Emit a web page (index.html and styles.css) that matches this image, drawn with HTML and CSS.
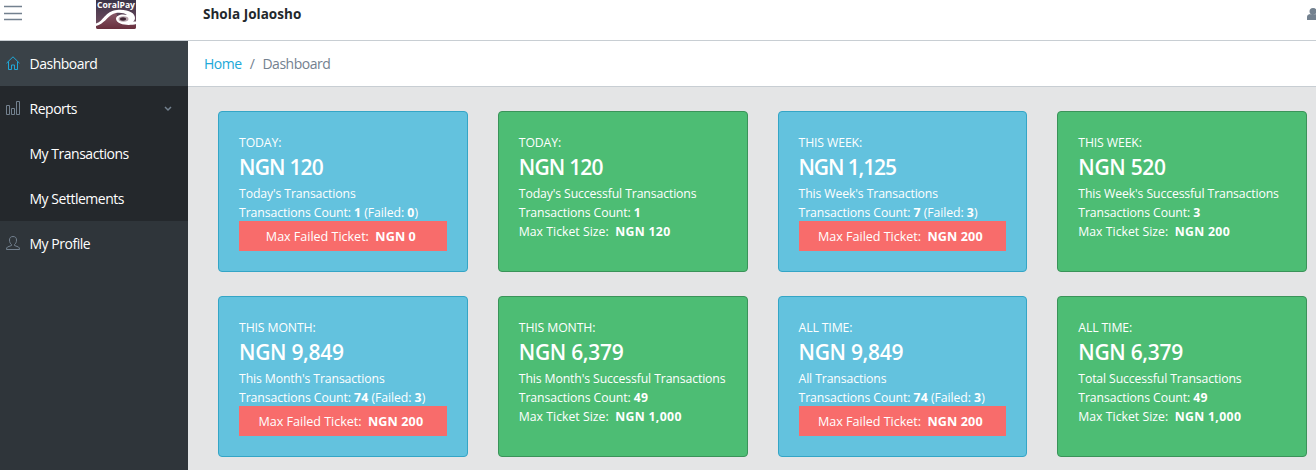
FILE: index.html
```
<!DOCTYPE html>
<html lang="en">
<head>
<meta charset="utf-8">
<title>Dashboard</title>
<link rel="stylesheet" href="styles.css">
</head>
<body>
<header class="header">
  <svg class="menu" viewBox="0 0 18 16"><path d="M0 1.500h18M0 8.500h18M0 14.500h18"/></svg>
  <svg class="logo" viewBox="0 0 40 29">
    <defs>
      <linearGradient id="sky" x1="0" y1="0" x2="0" y2="1"><stop offset="0" stop-color="#3b3448"/><stop offset=".6" stop-color="#5f4458"/><stop offset="1" stop-color="#7c5160"/></linearGradient>
      <linearGradient id="wave" x1="0" y1="0" x2="0" y2="1"><stop offset="0" stop-color="#8a5c6c"/><stop offset="1" stop-color="#682f3d"/></linearGradient>
    </defs>
    <path d="M0 0h40v27q0 2-2 2H2q-2 0-2-2z" fill="url(#sky)"/>
    <path d="M0 25C9 22 10 12 20 12L23 22L40 25V27q0 2-2 2H2q-2 0-2-2z" fill="url(#wave)"/>
    <path d="M0 23.500C7 22 9 11 21 10C32 9 39 13 39 18C39 20 38 21 37 21.500L40 21.500V24C33 26 21 25 20 19C20 15 26 13.500 31 15C28 12.500 21 12 17 14C11 17 8 24 0 26z" fill="#fff"/>
    <ellipse cx="27.500" cy="19" rx="5" ry="2.800" fill="#b9a4ad"/>
    <ellipse cx="27" cy="19" rx="3" ry="1.700" fill="#3f2635"/>
    <text x="20" y="7.500" text-anchor="middle" textLength="38" lengthAdjust="spacingAndGlyphs" class="logo-text">CoralPay</text>
  </svg>
  <strong class="user">Shola Jolaosho</strong>
  <svg class="avatar" viewBox="0 0 12 12"><path d="M2.500 3.500a3.500 3.500 0 0 1 7 0C9.500 8 2.500 8 2.500 3.500zM0 12V9q0-2.500 3-3 3 2 6 0 3 .5 3 3v3z"/></svg>
</header>
<div class="body">
  <nav class="sidebar">
    <a class="item active"><svg class="icon" viewBox="0 0 14 14"><path d="M.5 7.200 7 .8l6.500 6.400M2.500 5.500v8h3V9h3v4.500h3v-8"/></svg><span>Dashboard</span></a>
    <div class="group">
      <a class="item"><svg class="icon" viewBox="0 0 14 14"><path d="M.5 4.500h3v9h-3zM5.500 7.500h3v6h-3zM10.500.5h3v13h-3z"/></svg><span>Reports</span><svg class="chevron" viewBox="0 0 8 6"><path d="m1 1 3 3 3-3"/></svg></a>
      <a class="item sub">My Transactions</a>
      <a class="item sub">My Settlements</a>
    </div>
    <a class="item"><svg class="icon" viewBox="0 0 14 14"><path d="M7 .5C4.500.5 3.500 2 3.500 4c0 2.200.8 3.700 2 4.500v1L1.500 11Q.5 11.500.5 13.500h13q0-2-1-2.500l-4-1.500v-1c1.200-.8 2-2.300 2-4.500 0-2-1-3.500-3.500-3.500z"/></svg><span>My Profile</span></a>
  </nav>
  <main class="main">
    <div class="breadcrumb"><a class="home">Home</a><span class="slash">/</span><span class="here">Dashboard</span></div>
    <section class="cards">
      <article class="card info"><div class="period">TODAY:</div><h4 class="amount tight">NGN 120</h4><p class="line">Today's Transactions</p><p class="line count">Transactions Count: <b>1</b> (Failed: <b>0</b>)</p><p class="failed">Max Failed Ticket: &nbsp;<b>NGN 0</b></p></article>
      <article class="card success"><div class="period">TODAY:</div><h4 class="amount tight">NGN 120</h4><p class="line">Today's Successful Transactions</p><p class="line count">Transactions Count: <b>1</b></p><p class="line ticket">Max Ticket Size: &nbsp;<b>NGN 120</b></p></article>
      <article class="card info"><div class="period">THIS WEEK:</div><h4 class="amount tighter">NGN 1,125</h4><p class="line">This Week's Transactions</p><p class="line count">Transactions Count: <b>7</b> (Failed: <b>3</b>)</p><p class="failed">Max Failed Ticket: &nbsp;<b>NGN 200</b></p></article>
      <article class="card success"><div class="period">THIS WEEK:</div><h4 class="amount">NGN 520</h4><p class="line">This Week's Successful Transactions</p><p class="line count">Transactions Count: <b>3</b></p><p class="line ticket">Max Ticket Size: &nbsp;<b>NGN 200</b></p></article>
      <article class="card info"><div class="period">THIS MONTH:</div><h4 class="amount">NGN 9,849</h4><p class="line">This Month's Transactions</p><p class="line count">Transactions Count: <b>74</b> (Failed: <b>3</b>)</p><p class="failed">Max Failed Ticket: &nbsp;<b>NGN 200</b></p></article>
      <article class="card success"><div class="period">THIS MONTH:</div><h4 class="amount">NGN 6,379</h4><p class="line">This Month's Successful Transactions</p><p class="line count">Transactions Count: <b>49</b></p><p class="line ticket">Max Ticket Size: &nbsp;<b>NGN 1,000</b></p></article>
      <article class="card info"><div class="period">ALL TIME:</div><h4 class="amount">NGN 9,849</h4><p class="line">All Transactions</p><p class="line count">Transactions Count: <b>74</b> (Failed: <b>3</b>)</p><p class="failed">Max Failed Ticket: &nbsp;<b>NGN 200</b></p></article>
      <article class="card success"><div class="period">ALL TIME:</div><h4 class="amount">NGN 6,379</h4><p class="line">Total Successful Transactions</p><p class="line count">Transactions Count: <b>49</b></p><p class="line ticket">Max Ticket Size: &nbsp;<b>NGN 1,000</b></p></article>
    </section>
  </main>
</div>
</body>
</html>
```
FILE: styles.css
```
* { box-sizing: border-box; }
body { margin: 0; height: 470px; overflow: hidden; display: flex; flex-direction: column; background: #e4e5e6; color: #23282c; font: 14px/21px "Open Sans", "Noto Sans", sans-serif; letter-spacing: -0.48px; }
svg { display: block; flex: none; }
.header { flex: none; height: 41px; display: flex; align-items: flex-start; background: #fff; border-bottom: 1px solid #c8ced3; overflow: hidden; }
.menu { width: 18px; height: 16px; margin: 5px 0 0 4px; fill: none; stroke: #73818f; stroke-width: 1.3; }
.logo { width: 40px; height: 29px; margin-left: 74px; }
.logo-text { font: bold 8px "Open Sans", sans-serif; fill: #fff; letter-spacing: 0; }
.user { margin: 4px 0 0 67px; font-size: 13.5px; letter-spacing: 0.03px; }
.avatar { width: 12px; height: 12px; margin: 8px -3px 0 auto; fill: #73818f; }
.body { flex: 1; min-height: 0; display: flex; }
.sidebar { flex: none; width: 188px; background: #2f353a; color: #fff; }
.item { display: flex; align-items: center; height: 45px; padding: 0 16px 0 6px; }
.item.active { background: #3a4248; }
.group { background: #24282c; }
.icon { width: 14px; height: 14px; margin: 0 9.5px 2px 0; fill: none; stroke: #73818f; stroke-width: 1; }
.active .icon { stroke: #20a8d8; }
.sub { padding-left: 29.5px; }
.chevron { width: 8px; height: 6px; margin-left: auto; fill: none; stroke: #73818f; stroke-width: 1.5; }
.main { flex: 1; min-width: 0; }
.breadcrumb { display: flex; align-items: center; height: 46px; padding-left: 16px; background: #fff; border-bottom: 1px solid #c8ced3; }
.home { color: #20a8d8; letter-spacing: -0.45px; }
.slash { margin: 0 8px; color: #73818f; }
.here { color: #73818f; }
.cards { display: grid; grid-template-columns: repeat(4, 1fr); grid-auto-rows: 161px; gap: 24px 30px; padding: 24px 9px 0 30px; }
.card { padding: 20px; border: 1px solid; border-radius: 4px; color: #fff; font-size: 12.25px; letter-spacing: -0.12px; white-space: nowrap; }
.info { background: #63c2de; border-color: #34a5c6; }
.success { background: #4dbd74; border-color: #3a9359; }
.period { height: 21px; line-height: 21px; }
.amount { margin: 0 0 4px; height: 26px; line-height: 29px; font-size: 21px; font-weight: 600; letter-spacing: -0.3px; }
.tight { letter-spacing: -0.8px; }
.tighter { letter-spacing: -1.1px; }
.line { margin: 0; height: 19px; line-height: 21px; }
.line b { letter-spacing: 0.2px; }
.count { letter-spacing: -0.09px; }
.ticket { letter-spacing: 0.02px; }
.ticket b { letter-spacing: 0.35px; }
.failed { margin: 0; height: 30px; padding-right: 4px; line-height: 31px; font-size: 12.6px; letter-spacing: -0.04px; background: #f86c6b; text-align: center; }
.failed b { letter-spacing: 0.1px; }
```
